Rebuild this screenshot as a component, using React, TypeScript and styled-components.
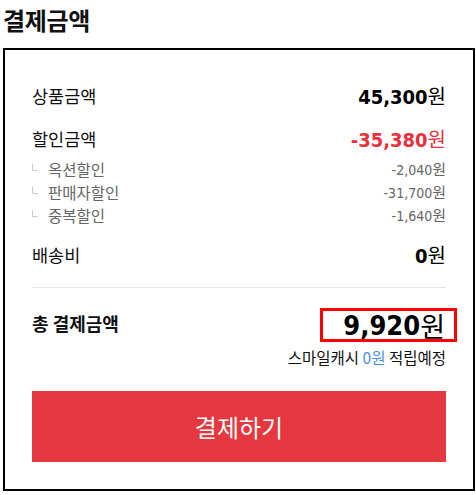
import React from "react";
import styled, { createGlobalStyle } from "styled-components";

const GlobalStyle = createGlobalStyle`
  body {
    margin: 0;
    background: #fff;
    font-family: "Noto Sans CJK KR", sans-serif;
    color: #111;
  }
`;

const NUM_FONT = `"DejaVu Sans Condensed", "DejaVu Sans", "Noto Sans CJK KR", sans-serif`;

const Page = styled.div`
  padding: 0 1px 0 3px;
  width: 472px;
`;

const Title = styled.h2`
  margin: 0;
  height: 48px;
  line-height: 40px;
  font-size: 24px;
  font-weight: 700;
  letter-spacing: -0.3px;
`;

const Box = styled.div`
  border: 2px solid #000;
  padding: 30px 27px 27px;
`;

const Row = styled.div<{ $gap?: number }>`
  display: flex;
  justify-content: space-between;
  align-items: center;
  height: 30px;
  margin-top: ${(p) => p.$gap ?? 13}px;
  &:first-child {
    margin-top: 0;
  }
`;

const Label = styled.span`
  font-size: 17.5px;
  font-weight: 400;
`;

const Amount = styled.span<{ $red?: boolean }>`
  font-family: ${NUM_FONT};
  font-size: 20px;
  font-weight: 700;
  color: ${(p) => (p.$red ? "#e8313c" : "#000")};
`;

const Won = styled.span`
  font-family: "Noto Sans CJK KR", sans-serif;
  font-weight: 400;
`;

const SubList = styled.div`
  margin-top: 4px;
`;

const SubRow = styled.div`
  display: flex;
  justify-content: space-between;
  align-items: center;
  height: 23px;
  font-size: 15.5px;
  color: #666;
`;

const SubLabel = styled.span`
  display: flex;
  align-items: center;
`;

const Corner = styled.span`
  width: 5px;
  height: 6px;
  border-left: 1px solid #ccc;
  border-bottom: 1px solid #ccc;
  margin: 0 10px 0 0;
  position: relative;
  top: -1px;
`;

const SubAmount = styled.span`
  font-family: ${NUM_FONT};
  font-size: 14px;
  color: #666;
`;

const SubWon = styled.span`
  font-family: "Noto Sans CJK KR", sans-serif;
  font-size: 15px;
`;

const Divider = styled.hr`
  border: none;
  border-top: 1px solid #e5e5e5;
  margin: 18px 0 0;
`;

const TotalRow = styled.div`
  display: flex;
  justify-content: space-between;
  align-items: center;
  height: 34px;
  margin-top: 20px;
`;

const TotalLabel = styled.span`
  font-size: 18px;
  font-weight: 700;
  position: relative;
  top: -2px;
`;

const TotalAmount = styled.span`
  font-family: ${NUM_FONT};
  font-size: 27px;
  font-weight: 700;
  color: #000;
  width: 137px;
  height: 34px;
  box-sizing: border-box;
  border: 3px solid #ff0000;
  margin-right: -11px;
  padding-right: 9px;
  display: flex;
  align-items: center;
  justify-content: flex-end;
`;

const TotalWon = styled.span`
  font-family: "Noto Sans CJK KR", sans-serif;
  font-weight: 400;
`;

const CashNote = styled.div`
  margin-top: 5px;
  height: 20px;
  line-height: 20px;
  text-align: right;
  font-size: 15.5px;
  color: #111;
`;

const Blue = styled.span`
  color: #4a90e2;
`;

const PayButton = styled.button`
  display: block;
  width: 100%;
  height: 71px;
  margin-top: 24px;
  border: none;
  background: #e5373f;
  color: #fff;
  font-family: "Noto Sans CJK KR", sans-serif;
  font-size: 24px;
  cursor: pointer;
`;

const subs = [
  { name: "옥션할인", value: "-2,040" },
  { name: "판매자할인", value: "-31,700" },
  { name: "중복할인", value: "-1,640" },
];

export default function App() {
  return (
    <>
      <GlobalStyle />
      <Page>
        <Title>결제금액</Title>
        <Box>
          <Row>
            <Label>상품금액</Label>
            <Amount>
              45,300<Won>원</Won>
            </Amount>
          </Row>
          <Row>
            <Label>할인금액</Label>
            <Amount $red>
              -35,380<Won>원</Won>
            </Amount>
          </Row>
          <SubList>
            {subs.map((s) => (
              <SubRow key={s.name}>
                <SubLabel>
                  <Corner />
                  {s.name}
                </SubLabel>
                <SubAmount>
                  {s.value}
                  <SubWon>원</SubWon>
                </SubAmount>
              </SubRow>
            ))}
          </SubList>
          <Row>
            <Label>배송비</Label>
            <Amount>
              0<Won>원</Won>
            </Amount>
          </Row>
          <Divider />
          <TotalRow>
            <TotalLabel>총 결제금액</TotalLabel>
            <TotalAmount>
              9,920<TotalWon>원</TotalWon>
            </TotalAmount>
          </TotalRow>
          <CashNote>
            스마일캐시 <Blue>0원</Blue> 적립예정
          </CashNote>
          <PayButton>결제하기</PayButton>
        </Box>
      </Page>
    </>
  );
}
